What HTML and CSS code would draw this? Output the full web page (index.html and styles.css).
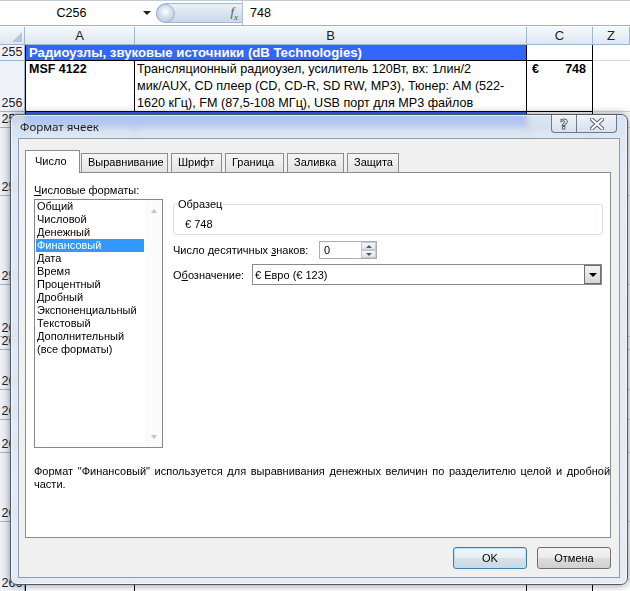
FILE: index.html
```html
<!DOCTYPE html>
<html lang="ru">
<head>
  <meta charset="UTF-8">
  <title>Формат ячеек</title>
  <link rel="stylesheet" href="styles.css">
</head>
<body>
  <!-- Formula bar -->
  <div class="formula-bar">
    <div class="name-box"><span class="nb-text">C256</span><span class="nb-arrow"></span></div>
    <div class="fx-pill"><span class="knob"></span><span class="fx">f<sub>x</sub></span></div>
    <div class="formula">748</div>
  </div>

  <!-- Worksheet -->
  <div class="grid">
    <div class="corner"><span class="corner-tri"></span></div>
    <div class="col-head">A</div>
    <div class="col-head">B</div>
    <div class="col-head">C</div>
    <div class="col-head">Z</div>

    <div class="row-head">255</div>
    <div class="cell cat wide">Радиоузлы, звуковые источники (dB Technologies)</div>
    <div class="cell price"></div>
    <div class="cell free"></div>

    <div class="row-head">256</div>
    <div class="cell model">MSF 4122</div>
    <div class="cell descr">Трансляционный радиоузел, усилитель 120Вт, вх: 1лин/2<br>мик/AUX, CD плеер (CD, CD-R, SD RW, MP3), Тюнер: AM (522-<br>1620 кГц), FM (87,5-108 МГц), USB порт для MP3 файлов</div>
    <div class="cell price"><span>€</span><span>748</span></div>
    <div class="cell free"></div>

    <!-- rows below are covered by the dialog -->
    <div class="row-head">257</div>
    <div class="cell cat wide"></div>
    <div class="cell price"></div>
    <div class="cell free"></div>

    <div class="row-head">258</div>
    <div class="cell model"></div>
    <div class="cell descr"></div>
    <div class="cell price"></div>
    <div class="cell free"></div>

    <div class="row-head">259</div>
    <div class="cell model"></div>
    <div class="cell descr"></div>
    <div class="cell price"></div>
    <div class="cell free"></div>

    <div class="row-head">260</div>
    <div class="cell model"></div>
    <div class="cell descr"></div>
    <div class="cell price"></div>
    <div class="cell free"></div>

    <div class="row-head">261</div>
    <div class="cell model"></div>
    <div class="cell descr"></div>
    <div class="cell price"></div>
    <div class="cell free"></div>

    <div class="row-head">262</div>
    <div class="cell model"></div>
    <div class="cell descr"></div>
    <div class="cell price"></div>
    <div class="cell free"></div>

    <div class="row-head">263</div>
    <div class="cell model"></div>
    <div class="cell descr"></div>
    <div class="cell price"></div>
    <div class="cell free"></div>

    <div class="row-head">264</div>
    <div class="cell model"></div>
    <div class="cell descr"></div>
    <div class="cell price"></div>
    <div class="cell free"></div>

    <div class="row-head">265</div>
    <div class="cell model"></div>
    <div class="cell descr"></div>
    <div class="cell price"></div>
    <div class="cell free"></div>

    <div class="row-head">266</div>
    <div class="cell model"></div>
    <div class="cell descr"></div>
    <div class="cell price"></div>
    <div class="cell free"></div>
  </div>

  <!-- Format Cells dialog -->
  <div class="dialog">
    <div class="titlebar">
      <span class="title">Формат ячеек</span>
      <div class="caption-btns">
        <span class="cap help">?</span>
        <span class="cap close">
          <svg width="14" height="12" viewBox="0 0 14 12">
            <path d="M2 1.5 L12 10.5 M12 1.5 L2 10.5" stroke="#5b6472" stroke-width="4" stroke-linecap="square"/>
            <path d="M2 1.5 L12 10.5 M12 1.5 L2 10.5" stroke="#ffffff" stroke-width="2" stroke-linecap="square"/>
          </svg>
        </span>
      </div>
    </div>

    <div class="client">
      <div class="tabs">
        <span class="tab active">Число</span>
        <span class="tab w-align">Выравнивание</span>
        <span class="tab w-font">Шрифт</span>
        <span class="tab w-border">Граница</span>
        <span class="tab w-fill">Заливка</span>
        <span class="tab w-protect">Защита</span>
      </div>

      <div class="panel">
        <div class="panel-body">
          <div class="formats">
            <div class="lbl"><u>Ч</u>исловые форматы:</div>
            <div class="listbox">
              <ul class="items">
                <li>Общий</li>
                <li>Числовой</li>
                <li>Денежный</li>
                <li class="selected">Финансовый</li>
                <li>Дата</li>
                <li>Время</li>
                <li>Процентный</li>
                <li>Дробный</li>
                <li>Экспоненциальный</li>
                <li>Текстовый</li>
                <li>Дополнительный</li>
                <li>(все форматы)</li>
              </ul>
              <div class="vscroll">
                <span class="arrow"><span class="tri-up"></span></span>
                <span class="arrow"><span class="tri-down"></span></span>
              </div>
            </div>
          </div>

          <div class="options">
            <fieldset class="sample">
              <legend>Образец</legend>
              <div class="sample-val">€ 748</div>
            </fieldset>

            <div class="opt-row decimals">
              <span class="opt-lbl">Число десятичных <u>з</u>наков:</span>
              <div class="spin">
                <span class="spin-val">0</span>
                <span class="spin-btns">
                  <span class="spin-btn"><span class="tri-up dark"></span></span>
                  <span class="spin-btn"><span class="tri-down dark"></span></span>
                </span>
              </div>
            </div>

            <div class="opt-row symbol">
              <span class="opt-lbl short">О<u>б</u>означение:</span>
              <div class="combo">
                <span class="combo-text">€ Евро (€ 123)</span>
                <span class="drop"><span class="tri-down black"></span></span>
              </div>
            </div>
          </div>
        </div>

        <p class="desc">Формат "Финансовый" используется для выравнивания денежных величин по разделителю целой и дробной<br>части.</p>
      </div>

      <div class="buttons">
        <button class="btn default">OK</button>
        <button class="btn">Отмена</button>
      </div>
    </div>
  </div>
</body>
</html>
```

FILE: styles.css
```css
* {
  box-sizing: border-box;
}
body {
  margin: 0;
  width: 630px;
  height: 591px;
  overflow: hidden;
  position: relative;
  background: #fff;
  font-family: "Liberation Sans", Arial, sans-serif;
  color: #000;
}

/* formula bar */
.formula-bar {
  display: flex;
  height: 26px;
  border-top: 1px solid #c3cbd6;
  border-bottom: 1px solid #9eb1c8;
  margin-bottom: 1px;
  background: #fff;
}
.name-box {
  width: 156px;
  display: flex;
  align-items: center;
  font-size: 12.5px;
}
.nb-text {
  width: 143px;
  text-align: center;
}
.nb-arrow {
  width: 0;
  height: 0;
  border-left: 4px solid transparent;
  border-right: 4px solid transparent;
  border-top: 4px solid #222;
}
.fx-pill {
  width: 86px;
  margin: 2px 0;
  display: flex;
  align-items: center;
  justify-content: space-between;
  border: 1px solid #a3b9d3;
  border-right: none;
  border-radius: 11px 0 0 11px;
  background: linear-gradient(#e9f0f9, #c9d8ea);
  padding-right: 4px;
}
.knob {
  width: 19px;
  height: 19px;
  margin-left: -1px;
  border-radius: 50%;
  border: 1px solid #9fb4cd;
  background: radial-gradient(circle at 50% 40%, #fff 0, #dbe5f1 35%, #aebfd6 100%);
}
.fx {
  font-family: "Liberation Serif", serif;
  font-style: italic;
  font-size: 13px;
  color: #555;
}
.fx sub {
  font-size: 9px;
}
.formula {
  flex: 1;
  border-left: 1px solid #aebfd3;
  padding-left: 7px;
  font-size: 12.5px;
  line-height: 24px;
}

/* sheet grid */
.grid {
  display: grid;
  grid-template-columns: 25px 110px 392px 66px 1fr;
  grid-template-rows: 18px 16px 51px 16px 68px 89px 52px 13px 40px 30px 33px 69px 70px;
}
.corner,
.col-head {
  background: linear-gradient(#f6f9fc, #dde6f1);
  border-right: 1px solid #9eb6ce;
  border-bottom: 1px solid #9eb6ce;
}
.corner {
  position: relative;
}
.corner-tri {
  position: absolute;
  right: 2px;
  bottom: 2px;
  width: 0;
  height: 0;
  border-left: 10px solid transparent;
  border-bottom: 10px solid #b7c6d8;
}
.col-head {
  text-align: center;
  font-size: 13px;
  line-height: 17px;
  color: #222;
}
.row-head {
  background: #eef2f8;
  border-right: 1px solid #9eb6ce;
  border-bottom: 1px solid #9eb6ce;
  display: flex;
  align-items: flex-end;
  justify-content: center;
  font-size: 12.5px;
  line-height: 15px;
  color: #222;
}
.cell {
  border-right: 1px solid #000;
  border-bottom: 1px solid #000;
  font-size: 12.5px;
  line-height: 17px;
  white-space: nowrap;
  overflow: hidden;
}
.cell.model {
  border-left: 1px solid #000;
  padding: 0 3px;
  font-weight: bold;
}
.cell.descr {
  padding: 0 2px;
  font-size: 12.6px;
}
.cell.cat {
  border-left: 1px solid #000;
  background: #3366ff;
  color: #fff;
  font-weight: bold;
  font-size: 13.2px;
  line-height: 15px;
  padding-left: 3px;
}
.cell.wide {
  grid-column: span 2;
}
.cell.price {
  display: flex;
  justify-content: space-between;
  padding: 0 6px 0 5px;
  font-weight: bold;
}
.cell.free {
  border-right: none;
  border-bottom: 1px solid #d0d7e5;
}

/* dialog */
.dialog {
  position: absolute;
  left: 10px;
  top: 114px;
  width: 618px;
  height: 471px;
  border: 1px solid #4e5a6a;
  border-radius: 7px;
  background: linear-gradient(rgba(205, 220, 240, 0.78), rgba(224, 232, 243, 0.92) 40px, rgba(228, 234, 243, 0.94));
  backdrop-filter: blur(3px);
  box-shadow: 0 0 8px rgba(0, 0, 0, 0.45), inset 0 0 0 1px rgba(255, 255, 255, 0.6);
  padding: 0 7px 7px 7px;
  font-family: "Liberation Sans", Tahoma, sans-serif;
  font-size: 11px;
}
.titlebar {
  height: 23px;
  display: flex;
  align-items: flex-start;
}
.title {
  font-family: "Noto Sans", "Open Sans", sans-serif;
  font-size: 11.5px;
  line-height: 24px;
  padding-left: 2px;
  color: #1c1c1c;
}
.caption-btns {
  margin-left: auto;
  margin-right: 3px;
  display: flex;
  height: 18px;
  border: 1px solid #6d7888;
  border-top: none;
  border-radius: 0 0 4px 4px;
  overflow: hidden;
  background: linear-gradient(rgba(255, 255, 255, 0.55), rgba(215, 224, 237, 0.6));
}
.cap {
  display: flex;
  align-items: center;
  justify-content: center;
}
.help {
  width: 25px;
  border-right: 1px solid #6d7888;
  font-family: "DejaVu Sans", sans-serif;
  font-size: 14px;
  font-weight: bold;
  color: #fff;
  -webkit-text-stroke: 1px #5b6472;
}
.close {
  width: 39px;
}
.client {
  height: 440px;
  background: #f0f0f0;
  border: 1px solid #8e9cae;
}

/* tabs */
.tabs {
  display: flex;
  align-items: flex-end;
  height: 22px;
  margin-top: 11px;
  padding-left: 6px;
}
.tab {
  height: 19px;
  line-height: 17px;
  padding-left: 6px;
  border: 1px solid #898c95;
  border-bottom: none;
  background: linear-gradient(#f5f5f5, #e4e4e4);
  margin-right: 3px;
  white-space: nowrap;
}
.tab.active {
  position: relative;
  height: 23px;
  margin-bottom: -1px;
  width: 55px;
  padding-left: 9px;
  line-height: 20px;
  background: #fff;
  margin-right: 1px;
}
.w-align { width: 87px; }
.w-font { width: 51px; }
.w-border { width: 59px; }
.w-fill { width: 57px; }
.w-protect { width: 52px; }

.panel {
  width: 586px;
  height: 366px;
  margin-left: 6px;
  background: #fff;
  border: 1px solid #898c95;
  padding: 10px 7px 0 8px;
}
.panel-body {
  display: flex;
  gap: 10px;
}
.formats {
  width: 129px;
}
.lbl {
  line-height: 14px;
  margin-bottom: 2px;
}
.listbox {
  height: 249px;
  border: 1px solid #828790;
  display: flex;
}
.items {
  list-style: none;
  margin: 0;
  padding: 0 1px;
  flex: 1;
}
.items li {
  line-height: 13px;
  padding-left: 1px;
  white-space: nowrap;
}
.items li.selected {
  background: #3399ff;
  color: #fff;
}
.vscroll {
  width: 17px;
  display: flex;
  flex-direction: column;
  justify-content: space-between;
  background: #fbfbfb;
}
.arrow {
  height: 21px;
  display: flex;
  align-items: center;
  justify-content: center;
}
.tri-up,
.tri-down {
  width: 0;
  height: 0;
  border-left: 3.5px solid transparent;
  border-right: 3.5px solid transparent;
}
.tri-up {
  border-bottom: 4px solid #c2c2c2;
}
.tri-down {
  border-top: 4px solid #c2c2c2;
}
.tri-up.dark {
  border-bottom-color: #4f5a66;
  border-left-width: 3px;
  border-right-width: 3px;
  border-bottom-width: 3px;
}
.tri-down.dark {
  border-top-color: #4f5a66;
  border-left-width: 3px;
  border-right-width: 3px;
  border-top-width: 3px;
}
.tri-down.black {
  border-top-color: #000;
  border-left-width: 4px;
  border-right-width: 4px;
  border-top-width: 4px;
}

.options {
  flex: 1;
}
.sample {
  margin: 15px 0 0 0;
  padding: 7px 0 3px 11px;
  border: 1px solid #d5dfe5;
  border-radius: 3px;
  min-width: 0;
}
.sample legend {
  padding: 0 1px;
  margin-left: -8px;
  line-height: 13px;
}
.sample-val {
  line-height: 13px;
}
.opt-row {
  display: flex;
  align-items: center;
}
.decimals {
  margin-top: 6px;
}
.symbol {
  margin-top: 5px;
}
.opt-lbl {
  width: 146px;
  white-space: nowrap;
}
.opt-lbl.short {
  width: 79px;
}
.spin {
  width: 58px;
  height: 18px;
  border: 1px solid #abadb3;
  display: flex;
  background: #fff;
}
.spin-val {
  flex: 1;
  padding-left: 4px;
  line-height: 16px;
}
.spin-btns {
  width: 15px;
  display: flex;
  flex-direction: column;
}
.spin-btn {
  flex: 1;
  display: flex;
  align-items: center;
  justify-content: center;
  border: 1px solid #c4c9d1;
  background: linear-gradient(#f6f7f9, #dfe3e8);
}
.combo {
  width: 350px;
  height: 21px;
  border: 1px solid #8a8a8a;
  display: flex;
  align-items: center;
  background: #fff;
  padding-left: 2px;
}
.combo-text {
  flex: 1;
}
.drop {
  width: 17px;
  height: 19px;
  border: 1px solid #6f6f6f;
  background: linear-gradient(#f5f5f5, #d6d6d6);
  display: flex;
  align-items: center;
  justify-content: center;
}
.desc {
  margin: 17px 0 0 0;
  line-height: 13px;
  white-space: nowrap;
  word-spacing: 1.6px;
}

/* buttons */
.buttons {
  display: flex;
  justify-content: flex-end;
  gap: 10px;
  margin-top: 9px;
  padding-right: 8px;
}
.btn {
  width: 74px;
  height: 22px;
  border: 1px solid #707070;
  border-radius: 3px;
  background: linear-gradient(#f2f2f2 0%, #ebebeb 50%, #dddddd 51%, #cfcfcf 100%);
  font-family: "Liberation Sans", Tahoma, sans-serif;
  font-size: 11px;
  color: #000;
  padding: 0;
}
.btn.default {
  border-color: #3c7fb1;
  box-shadow: inset 0 0 0 1px #b9e0f7;
  background: linear-gradient(#f0f6fa 0%, #e6eef4 50%, #d7e2ea 51%, #cbd8e2 100%);
}
```
